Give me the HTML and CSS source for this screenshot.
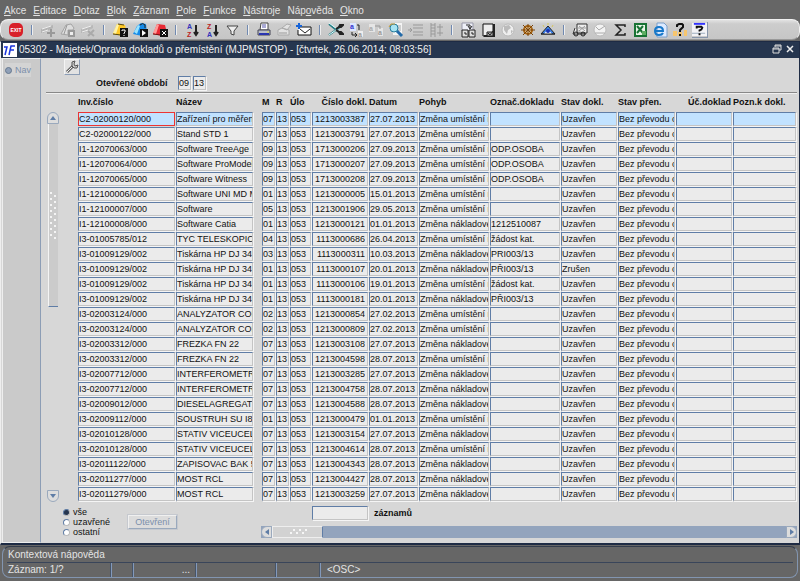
FILE: index.html
```html
<!DOCTYPE html>
<html lang="cs">
<head>
  <meta charset="UTF-8">
  <meta name="viewport" content="width=device-width, initial-scale=1.0">
  <title>05302 - Majetek/Oprava dokladů o přemístění</title>
  <link rel="stylesheet" href="styles.css">
</head>
<body>
  <nav class="menu">
    <a href="#"><u>A</u>kce</a>
    <a href="#"><u>E</u>ditace</a>
    <a href="#"><u>D</u>otaz</a>
    <a href="#"><u>B</u>lok</a>
    <a href="#"><u>Z</u>áznam</a>
    <a href="#"><u>P</u>ole</a>
    <a href="#"><u>F</u>unkce</a>
    <a href="#"><u>N</u>ástroje</a>
    <a href="#">Náp<u>o</u>věda</a>
    <a href="#"><u>O</u>kno</a>
  </nav>

  <div class="toolbar">
    <button class="tool exit" aria-label="Konec"><span>EXIT</span></button>
    <i class="sep"></i>
    <button class="tool" aria-label="Vložit záznam"><svg viewBox="0 0 16 16"><path d="M1 7l12-4v3L3 11H1z" fill="#b4b4b4"/><path d="M2 7l9-3M2 10l6-2" stroke="#eee"/><path d="M7 11h8M11 7v8" stroke="#999" stroke-width="2"/></svg></button>
    <button class="tool" aria-label="Kopírovat záznam"><svg viewBox="0 0 16 16"><path d="M1 12l5-9 5-1 3 4-1 2H8v5z" fill="#ddd" stroke="#a4a4a4"/><path d="M7 3L4 12" stroke="#999"/><path d="M8 8h7v7H8z" fill="#999"/><path d="M10 10h3v3h-3z" fill="#eee"/></svg></button>
    <button class="tool" aria-label="Smazat záznam"><svg viewBox="0 0 16 16"><path d="M1 7l12-4v3L3 11H1z" fill="#b8b8b8"/><path d="M2 7l9-3M2 10l6-2" stroke="#eee"/><path d="M8 9l6 5M14 8l-6 6" stroke="#aaa" stroke-width="2"/></svg></button>
    <i class="sep"></i>
    <button class="tool" aria-label="Zadat dotaz"><svg viewBox="0 0 16 16"><path d="M1 12l4-10 8 1 2 8-5 3z" fill="#ffc928"/><path d="M1 11l4-9 2 1-3 9z" fill="#fff3a5"/><path d="M1 12l8 1M6 2l6 1" stroke="#574810"/><path d="M8 6h8v9H8z" fill="#111"/><path d="M10 9V8h3v2l-1 1v1M12 13v1" stroke="#fff" fill="none"/></svg></button>
    <button class="tool" aria-label="Provést dotaz"><svg viewBox="0 0 16 16"><path d="M1 12l4-8 4-3 5 1 1 9-5 3z" fill="#168be8"/><path d="M2 10l4-7 2 1-3 8z" fill="#99e3ff"/><path d="M8 3q3-3 5 0v3" fill="none" stroke="#222"/><path d="M8 7h8v8H8z" fill="#111"/><path d="M10 8l4 3-4 3z" fill="#fff"/></svg></button>
    <button class="tool" aria-label="Zrušit dotaz"><svg viewBox="0 0 16 16"><path d="M1 12l4-10 8 1 2 8-5 3z" fill="#e72b35"/><path d="M1 11l4-9 2 1-3 9z" fill="#ff9b98"/><path d="M1 12l8 1" stroke="#711"/><path d="M8 7h8v8H8z" fill="#111"/><path d="M10 9l4 4M14 9l-4 4" stroke="#fff"/></svg></button>
    <i class="sep"></i>
    <button class="tool" aria-label="Řadit vzestupně"><svg viewBox="0 0 16 16"><text x="3" y="7" fill="#33b">A</text><text x="3" y="15" fill="#b22">Z</text><path d="M12 3v9M10 10l2 3 2-3" class="ink bold"/></svg></button>
    <button class="tool" aria-label="Řadit sestupně"><svg viewBox="0 0 16 16"><text x="3" y="7" fill="#b22">Z</text><text x="3" y="15" fill="#33b">A</text><path d="M12 3v9M10 10l2 3 2-3" class="ink bold"/></svg></button>
    <button class="tool" aria-label="Filtr"><svg viewBox="0 0 16 16"><path d="M3 4h11l-4 5v4l-3-1V9z" fill="#eee" stroke="#444"/></svg></button>
    <i class="sep"></i>
    <button class="tool" aria-label="Tisk"><svg viewBox="0 0 16 16"><path d="M5 1h7v7H4z" fill="#fff" stroke="#444"/><path d="M6 3h4M6 5h4" stroke="#55a"/><path d="M2 8h12v5H2z" fill="#b9bdca" stroke="#445"/><path d="M3 12h10" stroke="#2a35b0" stroke-width="2"/><path d="M11 10h2" stroke="#dd4"/></svg></button>
    <button class="tool" aria-label="Náhled tisku"><svg viewBox="0 0 16 16"><path d="M6 6l5-4 4 1-4 5zM2 8l4-2 7 2v5H2z" fill="#e2e2e2" stroke="#aaa"/><path d="M3 11h8" stroke="#999"/></svg></button>
    <button class="tool" aria-label="Odeslat"><svg viewBox="0 0 16 16"><path d="M4 5h11v8H2V8" fill="#fff" stroke="#111"/><path d="M4 7l5 4 5-4" class="ink"/><path d="M3 1v6M0 4h6" stroke="#1764d8" stroke-width="2"/></svg></button>
    <i class="sep"></i>
    <button class="tool" aria-label="Vyjmout"><svg viewBox="0 0 16 16"><path d="M1 2l11 9M1 13L12 5" stroke="#237b83" stroke-width="2"/><path d="M1 1l8 6M1 13l7-5" stroke="#e3ffff"/><path d="M8 7l3-2M8 8l3 2" class="ink bold"/><path d="M15 3h-3l-1 2h2zM15 12h-3l-1-2h2z" class="ink bold"/></svg></button>
    <button class="tool" aria-label="Kopírovat"><svg viewBox="0 0 16 16"><path d="M2 1h6v8H2z" fill="#dce6ff"/><text x="2" y="7" fill="#33c">a</text><path d="M9 3h2v5M4 10v3h4M7 11l2 2-2 2" class="ink"/><path d="M10 9h5v6h-5z" fill="#eee"/><text x="10" y="15" fill="#999">a</text></svg></button>
    <button class="tool" aria-label="Vložit"><svg viewBox="0 0 16 16"><path d="M1 2h6v8H1zM10 6h5v8h-5z" fill="#e5e5e5"/><text x="1" y="9" fill="#aaa">a</text><text x="10" y="13" fill="#999">a</text><path d="M7 4h5v3" fill="none" stroke="#999"/></svg></button>
    <button class="tool" aria-label="Hledat"><svg viewBox="0 0 16 16"><path d="M5 1h9v12H5z" fill="#f4f4f4"/><path d="M9 4h4M10 6h3M10 8h3" stroke="#aaa"/><path d="M8 8l6 6" stroke="#236aa8" stroke-width="3"/><circle cx="6" cy="6" r="4" fill="#a8e4f3" stroke="#267b9c"/><path d="M1 5l2-3h4" fill="none" stroke="#c79a36"/></svg></button>
    <button class="tool" aria-label="Seznam hodnot"><svg viewBox="0 0 16 16"><path d="M5 3h10M5 6h10M5 10h10M5 13h10M0 8h4M2 6l2 2-2 2" fill="none" stroke="#999"/></svg></button>
    <button class="tool" aria-label="Detail"><svg viewBox="0 0 16 16"><path d="M3 1v14M7 1v14M3 3h4M3 6h4M3 9h4M3 12h4M9 5h6M9 11h6M12 2v12" stroke="#999"/></svg></button>
    <i class="sep"></i>
    <button class="tool" aria-label="Převod"><svg viewBox="0 0 16 16"><path d="M2 1h11v8H2z" fill="#eef0f8" stroke="#99a"/><path d="M6 3h4v3M8 4l2 3 2-3" class="ink"/><path d="M2 8h6v7H2zM9 8h6v7H9z" fill="#ddd" stroke="#222"/><path d="M4 11h2v2M11 11h2v2" class="ink"/></svg></button>
    <button class="tool" aria-label="Poznámka"><svg viewBox="0 0 16 16"><path d="M3 2h10v12H3z" fill="#eee" stroke="#111"/><path d="M4 14h10V2" class="ink bold"/><path d="M7 10h6v4H7z" fill="#aaa" stroke="#222"/><path d="M8 11l2 2 3-4" class="ink"/></svg></button>
    <button class="tool" aria-label="Web"><svg viewBox="0 0 16 16"><circle cx="8" cy="8" r="6" fill="#eee" stroke="#bbb"/><path d="M4 4l5-1 2 3-3 2-1 4-3-4zM11 8l2 1-2 3z" fill="#bbb"/></svg></button>
    <button class="tool" aria-label="Nastavení"><svg viewBox="0 0 16 16"><circle cx="8" cy="8" r="4" fill="#ecd3a6" stroke="#a86512" stroke-width="2"/><path d="M8 2v12M1 8h14M3 3l10 10M13 3L3 13" stroke="#784208"/></svg></button>
    <button class="tool" aria-label="Zobrazit"><svg viewBox="0 0 16 16"><path d="M1 12l7-8 7 8z" fill="#3b7fe6" stroke="#222"/><path d="M8 1v2M3 3l1 2M13 3l-1 2" stroke="#d7c75b"/><path d="M4 12q4-7 8 0z" fill="#fff"/><circle cx="8" cy="9" r="2" fill="#1732b2"/><path d="M1 12h14" stroke="#222"/></svg></button>
    <i class="sep"></i>
    <button class="tool" aria-label="Doprava"><svg viewBox="0 0 16 16"><path d="M5 2h10v9H5zM3 6L1 12h13" fill="#eee" stroke="#333"/><path d="M7 4l6 5M13 4L7 9M5 6h10" stroke="#999"/><circle cx="4" cy="12" r="2" class="ink"/><circle cx="11" cy="12" r="2" class="ink"/></svg></button>
    <button class="tool" aria-label="Kontrola"><svg viewBox="0 0 16 16"><circle cx="8" cy="8" r="6" fill="#f3f3f3" stroke="#bbb"/><path d="M4 5l3 3 6-4M3 11h10" fill="none" stroke="#aaa"/></svg></button>
    <button class="tool" aria-label="Součet"><svg viewBox="0 0 16 16"><path d="M13 5V3H4l5 5-5 5h9v-2" fill="none" stroke="#222" stroke-width="1.500"/></svg></button>
    <button class="tool" aria-label="Excel"><svg viewBox="0 0 16 16"><path d="M3 2h11v12H3z" fill="#eaf7e8" stroke="#187334" stroke-width="2"/><path d="M5 4l6 7M11 4l-6 7" stroke="#187334" stroke-width="2"/><path d="M10 9h4v4h-4z" fill="#5cae62"/></svg></button>
    <button class="tool" aria-label="Prohlížeč"><svg viewBox="0 0 16 16"><path d="M5 1h7l3 3v11H5z" fill="#dceaff" stroke="#7a9fc9"/><path d="M3 9h8q0-4-4-4t-4 4 4 4q3 0 4-2" fill="none" stroke="#1678ca" stroke-width="2"/></svg></button>
    <button class="tool" aria-label="Nápověda k formuláři"><svg viewBox="0 0 16 16"><path d="M1 9h4v5H1zM6 10h4v4H6zM12 8h3v6h-3z" fill="#f7c66e"/><path d="M5 5V3l2-1h3l1 1v2L8 8v2M8 12v2" fill="none" stroke="#111" stroke-width="2"/></svg></button>
    <button class="tool raised" aria-label="Nápověda"><svg viewBox="0 0 16 16"><path d="M0 1h16v14H0z" fill="#f3f3f6"/><path d="M2 2h12" stroke="#33f" stroke-width="2"/><path d="M0 12h14" stroke="#9ab"/><path d="M5 7V5h5l1 1-1 2-2 1v1M8 12v2" fill="none" stroke="#111" stroke-width="2"/></svg></button>
  </div>

  <main class="window">
    <header class="title">
      <svg class="logo" viewBox="0 0 14 14"><path d="M0 0h14v14H0z" fill="#fff"/><path d="M1 4h3L2 12M12 3H8L6 12M7 7h4" fill="none" stroke="#1a35dd" stroke-width="1.500"/></svg>
      <h1>05302 - Majetek/Oprava dokladů o přemístění (MJPMSTOP) - [čtvrtek, 26.06.2014; 08:03:56]</h1>
      <button class="winbtn" aria-label="Obnovit"><svg viewBox="0 0 10 10"><path d="M3 3V1h6v5H7M1 4h6v5H1zM3 2h6M1 5h6" fill="none" stroke="#ddd"/></svg></button>
      <button class="winbtn" aria-label="Zavřít"><svg viewBox="0 0 10 10"><path d="M2 2l6 6M8 2L2 8" stroke="#eee" stroke-width="1.500"/></svg></button>
    </header>

    <div class="content">
      <aside class="side">
        <button class="navbtn"><i></i>Nav</button>
      </aside>

      <section class="form">
        <div class="head">
          <button class="wrench" aria-label="Nástroje"><svg viewBox="0 0 14 14"><path d="M2 12l6-6" stroke="#666" stroke-width="3"/><path d="M2 12l6-6" stroke="#eee"/><path d="M10 1L7 2v4l2 2h3l1-3-3 1-1-2z" fill="#ccc" stroke="#555"/></svg></button>
          <div class="period">
            <label for="month">Otevřené období</label>
            <input class="field" id="month" value="09">
            <input class="field" value="13" aria-label="Rok">
          </div>
        </div>

        <div class="grid">
          <div class="vscroll">
            <button class="up" aria-label="Nahoru"></button>
            <div class="track"><div class="thumb"></div></div>
            <button class="down" aria-label="Dolů"></button>
          </div>
          <table>
            <colgroup>
              <col class="w-inv"><col class="w-name"><col class="w-gap"><col class="w-m"><col class="w-m"><col class="w-ulo">
              <col class="w-doc"><col class="w-date"><col class="w-text"><col class="w-text">
              <col class="w-doc"><col class="w-state"><col class="w-doc"><col>
            </colgroup>
            <thead>
              <tr>
                <th>Inv.číslo</th><th>Název</th><td></td><th>M</th><th>R</th><th>Úlo</th>
                <th class="num">Číslo dokl.</th><th>Datum</th><th>Pohyb</th><th>Označ.dokladu</th>
                <th>Stav dokl.</th><th>Stav přen.</th><th class="num">Úč.doklad</th><th>Pozn.k dokl.</th>
              </tr>
            </thead>
            <tbody id="rows"></tbody>
          </table>
        </div>

        <div class="foot">
          <div class="options">
            <div class="radios">
              <label><input type="radio" name="state" checked>vše</label>
              <label><input type="radio" name="state">uzavřené</label>
              <label><input type="radio" name="state">ostatní</label>
            </div>
            <button class="open" disabled>Otevření</button>
          </div>
          <div class="totals">
            <div class="count">
              <input class="field" id="count">
              <label for="count">záznamů</label>
            </div>
            <div class="hscroll">
              <button class="left" aria-label="Vlevo"></button>
              <div class="hthumb"></div>
              <button class="right" aria-label="Vpravo"></button>
            </div>
          </div>
        </div>
      </section>
    </div>
  </main>

  <footer class="status">
    <div class="hint">Kontextová nápověda</div>
    <div class="info">
      <span class="rec">Záznam: 1/?</span>
      <span class="s1"></span>
      <span class="s2">...</span>
      <span class="s3"></span>
      <span class="s4"></span>
      <span class="osc">&lt;OSC&gt;</span>
    </div>
  </footer>
  <script src="script.js"></script>
</body>
</html>
```

FILE: styles.css
```css
* {
  box-sizing: border-box;
}
body {
  margin: 0;
  background: #666;
  color: #111;
  font-family: "Liberation Sans", Arial, sans-serif;
  font-size: 9px;
}
button, input {
  font: inherit;
  color: inherit;
  margin: 0;
  padding: 0;
  border: 0;
  border-radius: 0;
}
button {
  background: none;
}
.menu {
  display: flex;
  gap: 7px;
  height: 19px;
  padding: 4px 4px 0;
  font-size: 10px;
  line-height: 13px;
}
.menu a {
  color: #e4e4e4;
  text-decoration: none;
}

/* toolbar */
.toolbar {
  display: flex;
  align-items: center;
  height: 21px;
  padding: 0 5px;
  background: linear-gradient(#e2e2e2, #cdcdcd 20%, #c6c6c6);
  border: 1px solid #f0f0f0;
  border-bottom-color: #999;
  border-radius: 8px;
}
.tool {
  flex: none;
  display: flex;
  align-items: center;
  justify-content: center;
  width: 20px;
  height: 18px;
}
.tool svg {
  width: 16px;
  height: 16px;
}
.tool text {
  font-size: 7px;
  font-weight: bold;
}
.ink {
  fill: none;
  stroke: #222;
}
.bold {
  stroke-width: 2;
}
.exit span {
  width: 14px;
  height: 14px;
  background: #d8202a;
  border-radius: 5px;
  color: #fff;
  font-size: 5px;
  font-weight: bold;
  line-height: 14px;
  text-align: center;
}
.raised svg {
  border-right: 1px solid #8795ab;
  border-bottom: 1px solid #8795ab;
}
.sep {
  flex: none;
  width: 12px;
  height: 10px;
  background: linear-gradient(90deg, #7089b0 1px, #eee 1px, #eee 2px, transparent 2px) 5px 0 no-repeat;
}

/* window */
.window {
  margin-top: 1px;
  border: 1px solid #1e2b44;
  border-left-color: #eee;
  border-bottom-width: 2px;
  background: #d7d7d7;
}
.title {
  display: flex;
  align-items: center;
  height: 16px;
  padding: 0 3px 0 2px;
  background: #26364f;
  color: #f0f0f0;
}
.logo {
  width: 14px;
  height: 14px;
}
.title h1 {
  flex: 1;
  margin: 0 0 0 2px;
  font-size: 10px;
  font-weight: normal;
  line-height: 14px;
}
.winbtn {
  width: 13px;
  height: 12px;
}
.winbtn svg {
  width: 10px;
  height: 10px;
}
.content {
  display: flex;
  padding-left: 1px;
}
.side {
  flex: none;
  width: 39px;
  padding: 4px 2px;
  background: #cacaca;
  border: 1px solid #eee;
  border-right: 1px solid #8c9db5;
}
.navbtn {
  display: flex;
  align-items: center;
  gap: 3px;
  color: #7b8fab;
  background: #d4d4d4;
  line-height: 14px;
}
.navbtn i {
  width: 7px;
  height: 7px;
  border-radius: 50%;
  background: #8fa0b8;
  border: 1px solid #66788f;
}
.form {
  flex: 1;
  min-width: 0;
  padding: 0 2px 5px 5px;
}
.head {
  display: flex;
  align-items: flex-start;
  gap: 16px;
  height: 35px;
  padding: 1px 0 0 18px;
  border-bottom: 1px solid #888;
  box-shadow: 0 1px 0 #f0f0f0;
}
.wrench {
  width: 16px;
  height: 16px;
  background: #e2e2e2;
  border: 1px solid #f4f4f4;
  border-right-color: #8c9db5;
  border-bottom-color: #8c9db5;
}
.wrench svg {
  display: block;
  width: 14px;
  height: 14px;
}
.period {
  display: flex;
  align-items: center;
  gap: 2px;
  height: 14px;
  margin-top: 17px;
  font-weight: bold;
}
.period label {
  width: 80px;
}
.period .field {
  width: 13px;
}
.field {
  display: block;
  width: 100%;
  height: 14px;
  background: #ebebeb;
  border: 1px solid #c4c4c4;
  border-top-color: #5f7da6;
  border-left-color: #5f7da6;
  box-shadow: 1px 1px 0 #f5f5f5;
  font-weight: normal;
  line-height: 12px;
  outline: 0;
}

/* records */
.grid {
  display: flex;
}
.vscroll {
  flex: none;
  display: flex;
  flex-direction: column;
  width: 12px;
  margin: 19px 19px 0 1px;
}
.vscroll button {
  display: flex;
  align-items: center;
  justify-content: center;
  height: 12px;
  background: #ddd;
  border: 1px solid #9aa9bd;
}
.vscroll .up {
  border-radius: 6px 6px 0 0;
}
.vscroll .down {
  border-radius: 0 0 6px 6px;
}
.up::before, .down::before, .left::before, .right::before {
  content: "";
  border: 3px solid transparent;
}
.up::before {
  border-top: 0;
  border-bottom: 4px solid #5f7da6;
}
.down::before {
  border-bottom: 0;
  border-top: 4px solid #5f7da6;
}
.left::before {
  border-left: 0;
  border-right: 4px solid #5f7da6;
}
.right::before {
  border-right: 0;
  border-left: 4px solid #5f7da6;
}
.track {
  flex: 1;
  padding: 0 1px;
}
.thumb {
  display: flex;
  align-items: center;
  height: 50%;
  background: #cbcbcb;
  border-left: 1px solid #f4f4f4;
  border-bottom: 1px solid #5f7da6;
}
.thumb::before {
  content: "";
  width: 9px;
  height: 48px;
  background:
    radial-gradient(circle at 2px 2px, #f4f4f4 1px, transparent 1px) 0 0 / 9px 6px,
    radial-gradient(circle at 6px 5px, #f4f4f4 1px, transparent 1px) 0 0 / 9px 6px;
}
table {
  flex: 1;
  width: 100%;
  min-width: 0;
  table-layout: fixed;
  border-collapse: collapse;
}
th, td {
  padding: 0 1px 1px 0;
}
th {
  height: 19px;
  text-align: left;
  line-height: 12px;
  white-space: nowrap;
}
.num {
  padding-right: 2px;
  text-align: right;
}
.w-inv { width: 98px; }
.w-name { width: 78px; }
.w-gap { width: 8px; }
.w-m { width: 14px; }
.w-ulo { width: 22px; }
.w-doc { width: 57px; }
.w-date { width: 50px; }
.w-text { width: 71px; }
.w-state { width: 58px; }
.current .field {
  background: #c1e2ff;
}
.current td:first-child .field {
  border-color: #ec3434;
  box-shadow: none;
}

/* below the records */
.foot {
  display: flex;
  padding-top: 4px;
}
.options {
  flex: none;
  display: flex;
  align-items: center;
  width: 215px;
  padding-left: 17px;
}
.radios {
  width: 65px;
}
.radios label {
  display: flex;
  align-items: center;
  gap: 3px;
  height: 10px;
}
.radios input {
  appearance: none;
  width: 7px;
  height: 7px;
  border-radius: 50%;
  background: #fff;
  border: 1px solid #bbb;
  border-top-color: #5f7da6;
  border-left-color: #5f7da6;
}
.radios input:checked {
  background: #26364f;
}
.open {
  width: 49px;
  height: 14px;
  color: #7b8fab;
  background: #dcdcdc;
  border: 1px solid #9aa9bd;
  border-top-color: #f0f0f0;
  border-left-color: #f0f0f0;
  box-shadow: 0 0 0 1px #c6c9cf;
}
.totals {
  flex: 1;
}
.count {
  display: flex;
  align-items: center;
  gap: 6px;
  padding-left: 51px;
  font-weight: bold;
}
.count .field {
  width: 56px;
}
.hscroll {
  display: flex;
  height: 12px;
  margin-top: 6px;
  background: #93a4bd;
}
.hscroll button {
  display: flex;
  align-items: center;
  justify-content: center;
  width: 11px;
  background: #ddd;
  border: 1px solid #9aa9bd;
}
.hscroll .left {
  border-radius: 6px 0 0 6px;
}
.hscroll .right {
  margin-left: auto;
  border-radius: 0 6px 6px 0;
}
.hthumb {
  display: flex;
  align-items: center;
  justify-content: center;
  width: 51px;
  background: #d2d2d2;
  border: 1px solid #eee;
  border-right-color: #5f7da6;
}
.hthumb::before {
  content: "";
  width: 18px;
  height: 6px;
  background:
    radial-gradient(circle at 2px 4px, #f6f6f6 1px, transparent 1px) 0 0 / 6px 6px,
    radial-gradient(circle at 5px 1px, #f6f6f6 1px, transparent 1px) 0 0 / 6px 6px;
}

/* status bar */
.status {
  margin: 1px 2px 0;
  border: 1px solid #8295b0;
  border-top-color: #333c4c;
  border-radius: 8px;
  color: #e4e4e4;
  font-size: 10px;
  line-height: 14px;
}
.hint {
  margin: 0 4px;
  padding: 1px 1px 0;
  border-bottom: 1px solid #39455a;
}
.info {
  display: flex;
  height: 14px;
  padding-left: 5px;
}
.info span {
  border-right: 2px groove #8299bb;
}
.rec {
  width: 104px;
}
.s1 {
  width: 22px;
}
.s2 {
  width: 63px;
  padding-right: 5px;
  text-align: right;
}
.s3 {
  width: 80px;
}
.s4 {
  width: 44px;
}
.info .osc {
  padding-left: 6px;
  border: 0;
}
```

FILE: script.js
```js
const labels = ["Inv.číslo", "Název", "", "M", "R", "Úlo", "Číslo dokl.", "Datum", "Pohyb", "Označ.dokladu", "Stav dokl.", "Stav přen.", "Úč.doklad", "Pozn.k dokl."];
const U = "Změna umístění nebo", N = "Změna nákladového";

// inv. number, name, month, document, date, movement, reference, state
const records = [
  ["C2-02000120/000", "Zařízení pro měření", "07", "1213003387", "27.07.2013 0", U],
  ["C2-02000122/000", "Stand STD 1", "07", "1213003791", "27.07.2013 0", U],
  ["I1-12070063/000", "Software TreeAge", "09", "1713000206", "27.09.2013 1", U, "ODP.OSOBA"],
  ["I1-12070064/000", "Software ProModel", "09", "1713000207", "27.09.2013 1", U, "ODP.OSOBA"],
  ["I1-12070065/000", "Software Witness", "09", "1713000208", "27.09.2013 1", U, "ODP.OSOBA"],
  ["I1-12100006/000", "Software UNI MD M", "01", "1213000005", "15.01.2013 1", U],
  ["I1-12100007/000", "Software", "05", "1213001906", "29.05.2013 0", U],
  ["I1-12100008/000", "Software Catia", "01", "1213000121", "01.01.2013 0", N, "1212510087"],
  ["I3-01005785/012", "TYC TELESKOPICKA", "04", "1113000686", "26.04.2013 0", U, "žádost kat."],
  ["I3-01009129/002", "Tiskárna HP DJ 3420", "03", "1113000311", "10.03.2013 1", N, "PRI003/13"],
  ["I3-01009129/002", "Tiskárna HP DJ 3420", "01", "1113000107", "20.01.2013 0", N, "PŘI003/13", "Zrušen"],
  ["I3-01009129/002", "Tiskárna HP DJ 3420", "01", "1113000106", "19.01.2013 0", U, "žádost kat."],
  ["I3-01009129/002", "Tiskárna HP DJ 3420", "01", "1113000181", "20.01.2013 1", N, "PŘI003/13"],
  ["I3-02003124/000", "ANALYZATOR COR", "02", "1213000854", "27.02.2013 0", U],
  ["I3-02003124/000", "ANALYZATOR COR", "02", "1213000809", "27.02.2013 0", U],
  ["I3-02003312/000", "FREZKA FN 22", "07", "1213003108", "27.07.2013 0", N],
  ["I3-02003312/000", "FREZKA FN 22", "07", "1213004598", "28.07.2013 0", U],
  ["I3-02007712/000", "INTERFEROMETR", "07", "1213003285", "27.07.2013 0", N],
  ["I3-02007712/000", "INTERFEROMETR", "07", "1213004758", "28.07.2013 0", N],
  ["I3-02009012/000", "DIESELAGREGATOR", "07", "1213004588", "28.07.2013 0", N],
  ["I3-02009112/000", "SOUSTRUH SU I8 R", "01", "1213000479", "01.01.2013 0", U],
  ["I3-02010128/000", "STATIV VICEUCELO", "07", "1213003154", "27.07.2013 0", N],
  ["I3-02010128/000", "STATIV VICEUCELO", "07", "1213004614", "28.07.2013 0", U],
  ["I3-02011122/000", "ZAPISOVAC BAK 5", "07", "1213004343", "28.07.2013 0", N],
  ["I3-02011277/000", "MOST RCL", "07", "1213004427", "28.07.2013 0", N],
  ["I3-02011279/000", "MOST RCL", "07", "1213003259", "27.07.2013 0", N]
];

const body = document.getElementById("rows");
records.forEach(function (r, i) {
  const row = body.insertRow();
  if (i === 0) row.className = "current";
  const values = [r[0], r[1], null, r[2], "13", "053", r[3], r[4], r[5], r[6] || "", r[7] || "Uzavřen", "Bez převodu odpisů", "", ""];
  values.forEach(function (value, c) {
    const cell = row.insertCell();
    if (value === null) return;
    const input = document.createElement("input");
    input.className = c === 6 ? "field num" : "field";
    input.value = value;
    input.setAttribute("aria-label", labels[c]);
    cell.appendChild(input);
  });
});
```
